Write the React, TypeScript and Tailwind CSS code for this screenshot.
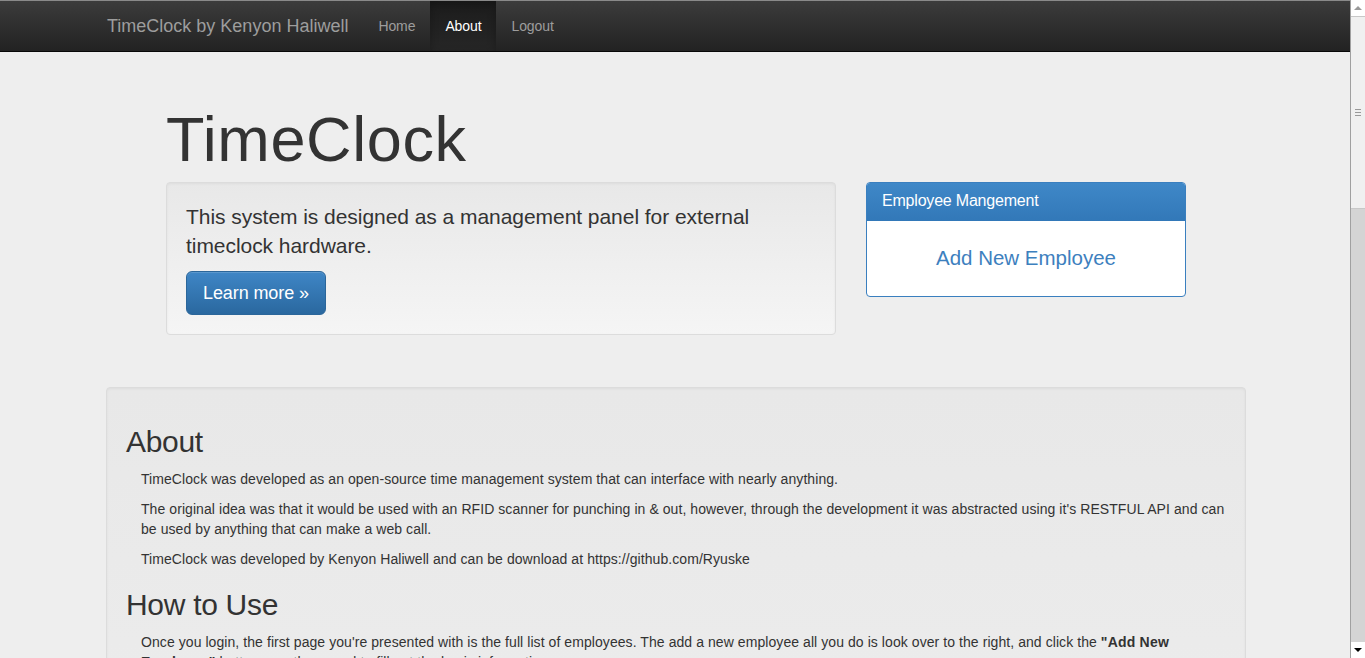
const navItems = [
  { label: 'Home', active: false },
  { label: 'About', active: true },
  { label: 'Logout', active: false },
]

function Navbar() {
  return (
    <header className="h-[52px] border-t border-t-[#8a8a8a] border-b border-b-[#080808] bg-gradient-to-b from-[#3c3c3c] to-[#222222]">
      <nav className="mx-auto flex h-full w-[1170px] items-stretch px-[2px]">
        <a className="flex items-center px-[15px] text-[18px] text-[#9d9d9d]">TimeClock by Kenyon Haliwell</a>
        <ul className="flex items-stretch text-[14px]">
          {navItems.map((item) =>
            item.active ? (
              <li
                key={item.label}
                className="flex items-center bg-gradient-to-b from-[#1c1c1c] to-[#262626] px-[15px] tracking-[-0.1px] text-white shadow-[inset_0_3px_9px_rgba(0,0,0,0.25)]"
              >
                {item.label}
              </li>
            ) : (
              <li key={item.label} className="flex items-center px-[15px] tracking-[-0.1px] text-[#9d9d9d]">
                {item.label}
              </li>
            )
          )}
        </ul>
      </nav>
    </header>
  )
}

function Jumbotron() {
  return (
    <section className="mx-auto w-[1020px] pt-[53px]">
      <h1 className="mb-[8px] text-[63px] leading-[69px] tracking-[0.6px] text-[#333]">TimeClock</h1>
      <div className="flex items-start gap-[30px]">
        <div className="w-[670px] rounded border border-[#dcdcdc] bg-gradient-to-b from-[#e8e8e8] to-[#f5f5f5] p-[19px] shadow-[inset_0_1px_3px_rgba(0,0,0,0.05)]">
          <p className="text-[21px] leading-[29px] tracking-[-0.05px] text-[#333]">
            This system is designed as a management panel for external timeclock hardware.
          </p>
          <button className="mt-[11px] h-[44px] rounded-[6px] border border-[#2b669a] bg-gradient-to-b from-[#3f86c6] to-[#2a689f] px-[16px] text-[18px] tracking-[-0.1px] text-white shadow-[inset_0_1px_0_rgba(255,255,255,0.15)]">
            Learn more »
          </button>
        </div>
        <div className="w-[320px] overflow-hidden rounded border border-[#3a7fbf] bg-white">
          <div className="h-[38px] bg-gradient-to-b from-[#3f88c8] to-[#3278b8] px-[15px] text-[16px] leading-[35px] tracking-[-0.2px] text-white">
            Employee Mangement
          </div>
          <div className="flex h-[75px] items-center justify-center text-[20.5px] text-[#3d80be]">
            Add New Employee
          </div>
        </div>
      </div>
    </section>
  )
}

function About() {
  return (
    <section className="mx-auto mt-[52px] w-[1140px] rounded border border-[#dcdcdc] bg-gradient-to-b from-[#e8e8e8] to-[#ececec] px-[19px] pb-[40px] pt-[19px] shadow-[inset_0_1px_3px_rgba(0,0,0,0.05)]">
      <h2 className="mt-[18px] mb-[11px] text-[30px] leading-[33px] tracking-[-0.3px] text-[#333]">About</h2>
      <div className="pl-[15px] text-[14px] leading-[20px] tracking-[0.07px] text-[#333]">
        <p className="mb-[10px]">
          TimeClock was developed as an open-source time management system that can interface with nearly anything.
        </p>
        <p className="mb-[10px]">
          The original idea was that it would be used with an RFID scanner for punching in &amp; out, however, through the
          development it was abstracted using it's RESTFUL API and can be used by anything that can make a web call.
        </p>
        <p className="mb-[10px]">TimeClock was developed by Kenyon Haliwell and can be download at https://github.com/Ryuske</p>
      </div>
      <h2 className="mt-[19px] mb-[11px] text-[30px] leading-[33px] tracking-[-0.3px] text-[#333]">How to Use</h2>
      <div className="pl-[15px] text-[14px] leading-[20px] tracking-[0.07px] text-[#333]">
        <p className="mb-[10px]">
          Once you login, the first page you're presented with is the full list of employees. The add a new employee all
          you do is look over to the right, and click the <b className="tracking-[0.2px]">"Add New Employee"</b> button, you
          then need to fill out the basic information.
        </p>
      </div>
    </section>
  )
}

function Scrollbar() {
  return (
    <div className="flex h-full w-[15px] shrink-0 flex-col border-l border-l-[#a0a0a0] bg-[#d4d4d4]">
      <div className="flex h-[16px] items-center justify-center bg-white">
        <div className="h-0 w-0 border-x-[4px] border-b-[4px] border-x-transparent border-b-[#999]" />
      </div>
      <div className="flex h-[193px] items-center justify-center border-y border-[#c8c8c8] bg-[#f0f0f0]">
        <div className="flex flex-col gap-[2px]">
          <div className="h-px w-[6px] bg-[#999]" />
          <div className="h-px w-[6px] bg-[#999]" />
          <div className="h-px w-[6px] bg-[#999]" />
        </div>
      </div>
      <div className="flex-1" />
      <div className="flex h-[16px] items-center justify-center bg-white">
        <div className="h-0 w-0 border-x-[4px] border-t-[4px] border-x-transparent border-t-black" />
      </div>
    </div>
  )
}

export default function App() {
  return (
    <div className="flex h-[658px] w-full overflow-hidden bg-[#eeeeee] font-['Liberation_Sans',Arial,sans-serif]">
      <div className="min-w-0 flex-1 overflow-hidden">
        <Navbar />
        <div className="pl-[2px]">
          <Jumbotron />
          <About />
        </div>
      </div>
      <Scrollbar />
    </div>
  )
}
